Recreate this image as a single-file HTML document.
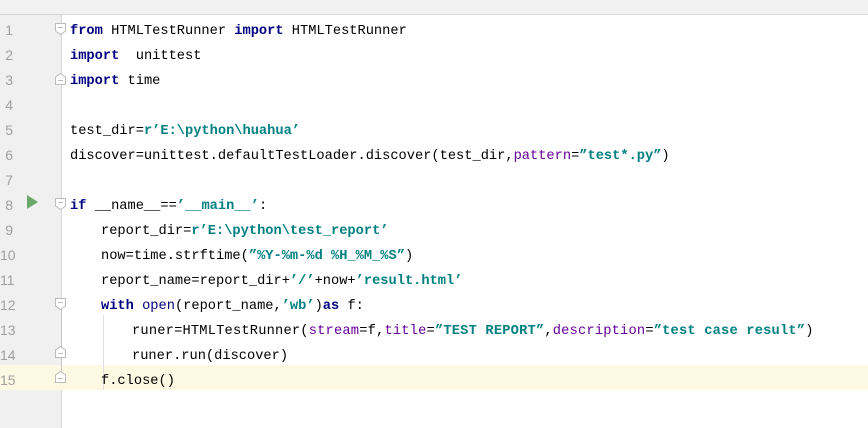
<!DOCTYPE html>
<html><head><meta charset="utf-8"><style>
html,body{margin:0;padding:0;width:868px;height:428px;overflow:hidden;background:#fff;}
.top{position:absolute;left:0;top:0;width:868px;height:14px;background:#f2f2f2;border-bottom:1px solid #d6d6d6;}
.gut{position:absolute;left:0;top:15px;width:61px;height:413px;background:#f0f0f0;border-right:1px solid #d8d8d8;}
.hl{position:absolute;left:0;top:365px;width:868px;height:25px;background:#fdf9e3;}
.ln{position:absolute;left:0;width:13px;text-align:right;font:14px "Liberation Sans",sans-serif;color:#a0a0a0;line-height:25px;margin-top:2px;}
.c{position:absolute;white-space:pre;font:13.7px "Liberation Mono",monospace;color:#000;line-height:25px;margin-top:3px;}
.k{color:#000080;font-weight:bold;}
.s{color:#008080;font-weight:bold;}
.p{color:#660099;}
.fold{position:absolute;left:55px;width:11px;height:12px;}
.run{position:absolute;left:27px;top:195px;width:0;height:0;border-left:11px solid #6aa96a;border-top:7px solid transparent;border-bottom:7px solid transparent;}
.guide{position:absolute;left:103px;top:315px;width:1px;height:75px;background:#e0e0e0;}
</style></head><body>
<div class="top"></div>
<div class="gut"></div>
<div class="hl"></div>
<div class="guide"></div>
<div style="position:absolute;left:61px;top:310px;width:1px;height:70px;background:#c8c8c8"></div>
<div class="ln" style="top:16px">1</div>
<div class="ln" style="top:41px">2</div>
<div class="ln" style="top:66px">3</div>
<div class="ln" style="top:91px">4</div>
<div class="ln" style="top:116px">5</div>
<div class="ln" style="top:141px">6</div>
<div class="ln" style="top:166px">7</div>
<div class="ln" style="top:191px">8</div>
<div class="ln" style="top:216px">9</div>
<div class="ln" style="top:241px">10</div>
<div class="ln" style="top:266px">11</div>
<div class="ln" style="top:291px">12</div>
<div class="ln" style="top:316px">13</div>
<div class="ln" style="top:341px">14</div>
<div class="ln" style="top:366px">15</div>
<div class="run"></div>
<svg class="fold" style="top:23px" viewBox="0 0 11 12"><path d="M0.5 0.5H10.5V8L5.5 11.5L0.5 8Z M3 4.5H8" fill="#fff" stroke="#bbb"/></svg>
<svg class="fold" style="top:73px" viewBox="0 0 11 12"><path d="M0.5 11.5H10.5V4L5.5 0.5L0.5 4Z M3 7.5H8" fill="#fff" stroke="#bbb"/></svg>
<svg class="fold" style="top:198px" viewBox="0 0 11 12"><path d="M0.5 0.5H10.5V8L5.5 11.5L0.5 8Z M3 4.5H8" fill="#fff" stroke="#bbb"/></svg>
<svg class="fold" style="top:298px" viewBox="0 0 11 12"><path d="M0.5 0.5H10.5V8L5.5 11.5L0.5 8Z M3 4.5H8" fill="#fff" stroke="#bbb"/></svg>
<svg class="fold" style="top:346px" viewBox="0 0 11 12"><path d="M0.5 11.5H10.5V4L5.5 0.5L0.5 4Z M3 7.5H8" fill="#fff" stroke="#bbb"/></svg>
<svg class="fold" style="top:371px" viewBox="0 0 11 12"><path d="M0.5 11.5H10.5V4L5.5 0.5L0.5 4Z M3 7.5H8" fill="#fff" stroke="#bbb"/></svg>
<div class="c" style="left:70px;top:16px"><span class="k">from</span> HTMLTestRunner <span class="k">import</span> HTMLTestRunner</div>
<div class="c" style="left:70px;top:41px"><span class="k">import</span>  unittest</div>
<div class="c" style="left:70px;top:66px"><span class="k">import</span> time</div>
<div class="c" style="left:70px;top:116px">test_dir=<span class="s">r’E:\python\huahua’</span></div>
<div class="c" style="left:70px;top:141px">discover=unittest.defaultTestLoader.discover(test_dir,<span class="p">pattern</span>=<span class="s">”test*.py”</span>)</div>
<div class="c" style="left:70px;top:191px"><span class="k">if</span> __name__==<span class="s">’__main__’</span>:</div>
<div class="c" style="left:101px;top:216px">report_dir=<span class="s">r’E:\python\test_report’</span></div>
<div class="c" style="left:101px;top:241px">now=time.strftime(<span class="s">”%Y-%m-%d %H_%M_%S”</span>)</div>
<div class="c" style="left:101px;top:266px">report_name=report_dir+<span class="s">’/’</span>+now+<span class="s">’result.html’</span></div>
<div class="c" style="left:101px;top:291px"><span class="k">with</span> <span style="color:#000080">open</span>(report_name,<span class="s">’wb’</span>)<span class="k">as</span> f:</div>
<div class="c" style="left:132px;top:316px;letter-spacing:0.2px">runer=HTMLTestRunner(<span class="p">stream</span>=f,<span class="p">title</span>=<span class="s">”TEST REPORT”</span>,<span class="p">description</span>=<span class="s">”test case result”</span>)</div>
<div class="c" style="left:132px;top:341px">runer.run(discover)</div>
<div class="c" style="left:101px;top:366px">f.close()</div>
</body></html>
